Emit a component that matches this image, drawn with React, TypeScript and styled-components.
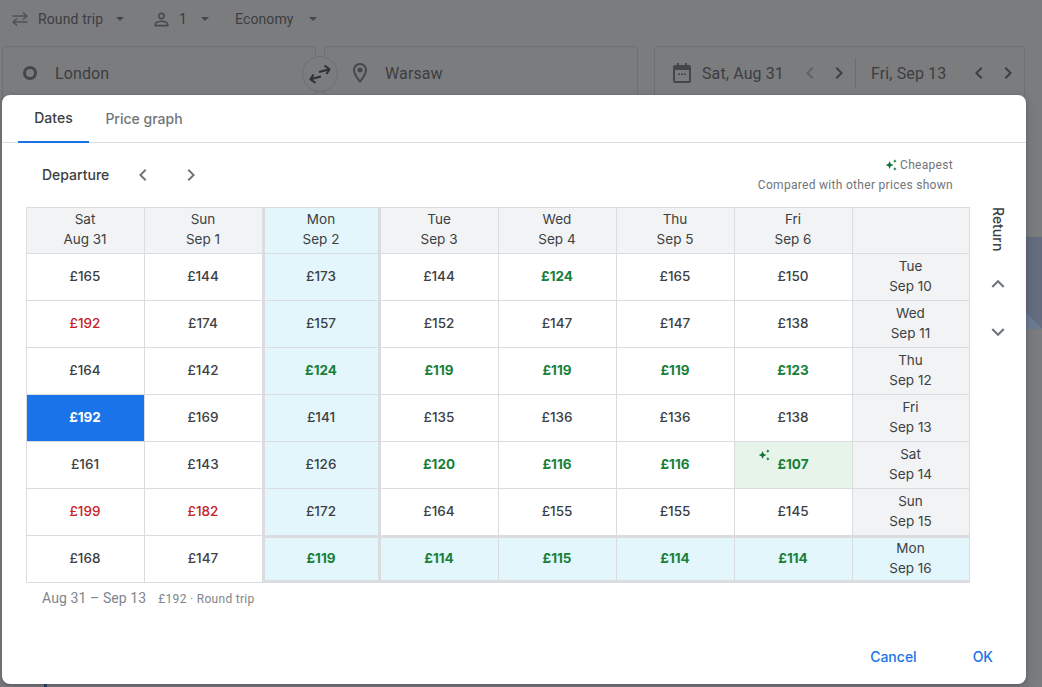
import React from "react";
import styled, { createGlobalStyle } from "styled-components";

const Global = createGlobalStyle`
  html, body { margin: 0; padding: 0; background: #7b7c7e; overflow: hidden; }
  * { box-sizing: border-box; }
  #root { width: 1042px; height: 687px; }
`;

const BODY = `"Roboto", "Liberation Sans", sans-serif`;
const DISPLAY = `"Inter", "Roboto", "Liberation Sans", sans-serif`;

const Page = styled.div`
  position: relative;
  width: 1042px;
  height: 687px;
  background: #7b7c7e;
  overflow: hidden;
  font-family: ${BODY};
  color: #3c3e42;
`;

const Toolbar = styled.div`
  display: flex;
  align-items: center;
  height: 38px;
  padding-left: 12px;
  font-size: 14px;
  letter-spacing: 0.12px;
`;

const ToolItem = styled.div<{ $w: number; $gap?: number }>`
  display: flex;
  align-items: center;
  width: ${(p) => p.$w}px;
  gap: ${(p) => p.$gap ?? 10}px;
  flex: none;
`;

const Caret = styled.span<{ $ml: number }>`
  width: 0;
  height: 0;
  margin-left: ${(p) => p.$ml}px;
  border-left: 4.5px solid transparent;
  border-right: 4.5px solid transparent;
  border-top: 4.5px solid #44464a;
`;

const SearchRow = styled.div`
  display: flex;
  height: 60px;
  padding: 8px 17px 0 2px;
  gap: 8px;
`;

const Field = styled.div<{ $w: number; $ml?: number }>`
  display: flex;
  align-items: center;
  width: ${(p) => p.$w}px;
  height: 60px;
  margin-left: ${(p) => p.$ml ?? 0}px;
  border: 1px solid #6e6f72;
  border-radius: 4px;
  font-size: 16px;
  letter-spacing: 0.12px;
  padding-bottom: 6px;
  color: #3c3e42;
  flex: none;
`;

const FieldIcon = styled.svg<{ $ml: number }>`
  margin-left: ${(p) => p.$ml}px;
  flex: none;
`;

const FieldText = styled.span<{ $ml: number }>`
  margin-left: ${(p) => p.$ml}px;
`;

const SwapBadge = styled.div`
  position: absolute;
  left: 302px;
  top: 56px;
  width: 36px;
  height: 36px;
  border-radius: 50%;
  background: #7b7c7e;
  border: 1px solid #6e6f72;
  display: flex;
  align-items: center;
  justify-content: center;
`;

const DateDivider = styled.span`
  width: 1px;
  height: 30px;
  background: #6a6b6e;
  margin: 0 15px 0 4px;
  flex: none;
`;

const NavGlyph = styled.svg<{ $ml?: number; $mt?: number }>`
  margin-left: ${(p) => p.$ml ?? 0}px;
  margin-top: ${(p) => p.$mt ?? 0}px;
  flex: none;
`;

const MapStrip = styled.div`
  position: absolute;
  left: 1026px;
  top: 237px;
  width: 16px;
  height: 92px;
  background: linear-gradient(45deg, #6b7a92 0 15%, #636d7f 15% 100%);
`;

const MapPin = styled.div`
  position: absolute;
  left: 44px;
  top: 684px;
  width: 3px;
  height: 3px;
  background: #2c3f66;
`;

const Dialog = styled.div`
  position: absolute;
  left: 2px;
  top: 95px;
  width: 1024px;
  height: 589px;
  background: #fff;
  border-radius: 8px;
  display: flex;
  flex-direction: column;
  box-shadow: 0 1px 3px rgba(40, 42, 46, 0.3), 0 4px 8px 3px rgba(40, 42, 46, 0.12);
`;

const Tabs = styled.div`
  display: flex;
  height: 48px;
  flex: none;
  padding-left: 16px;
  border-bottom: 1px solid #dadce0;
`;

const Tab = styled.div<{ $active?: boolean }>`
  height: 48px;
  width: ${(p) => (p.$active ? 71 : 110)}px;
  display: flex;
  align-items: center;
  justify-content: center;
  font-family: ${DISPLAY};
  font-size: 14px;
  font-weight: 500;
  padding-bottom: 1px;
  color: ${(p) => (p.$active ? "#3c4043" : "#70757a")};
  border-bottom: ${(p) => (p.$active ? "2px solid #1a73e8" : "none")};
`;

const Head = styled.div`
  display: flex;
  justify-content: space-between;
  height: 64px;
  flex: none;
`;

const HeadLeft = styled.div`
  display: flex;
  align-items: center;
  height: 62px;
  padding-left: 40px;
  font-family: ${DISPLAY};
  font-size: 14px;
  font-weight: 500;
  color: #3c4043;
`;

const Legend = styled.div`
  padding: 12px 73px 0 0;
  text-align: right;
  font-size: 12px;
  line-height: 20px;
  letter-spacing: 0.3px;
  color: #70757a;
`;

const LegendTop = styled.div`
  display: flex;
  justify-content: flex-end;
  align-items: center;
  gap: 3px;
`;

const Body = styled.div`
  display: flex;
  height: 376px;
  padding-left: 24px;
  flex: none;
`;

const Grid = styled.div`
  display: grid;
  grid-template-columns: repeat(7, 118px) 117px;
  grid-template-rows: 46px repeat(7, 47px);
  width: 944px;
  height: 376px;
  border-top: 1px solid #dadce0;
  border-left: 1px solid #dadce0;
`;

type Tone = "normal" | "low" | "high";

const sideRule = "inset 2px 0 0 #dadce0, inset -2px 0 0 #dadce0";
const rowRule = "inset 0 2px 0 #dadce0, inset 0 -2px 0 #dadce0";

const Cell = styled.div<{ $tone?: Tone; $bg?: string; $rowHi?: boolean; $colHi?: boolean }>`
  position: relative;
  display: flex;
  align-items: center;
  justify-content: center;
  font-family: ${DISPLAY};
  font-size: 13.5px;
  font-weight: ${(p) => (p.$tone === "low" ? 700 : 500)};
  padding: 0 1px 2px 0;
  color: ${(p) =>
    p.$tone === "low" ? "#188038" : p.$tone === "high" ? "#c5221f" : "#3c4043"};
  background: ${(p) => p.$bg ?? "#fff"};
  border-right: 1px solid #dadce0;
  border-bottom: 1px solid #dadce0;
  box-shadow: ${(p) =>
    [p.$colHi && sideRule, p.$rowHi && rowRule].filter(Boolean).join(", ") || "none"};
`;

const Label = styled(Cell)`
  flex-direction: column;
  font-weight: 400;
  line-height: 20px;
  color: #3c4043;
`;

const HeaderCell = styled(Label)`
  padding-bottom: 4px;
`;

const Selected = styled(Cell)`
  background: #1a73e8;
  color: #fff;
  font-weight: 700;
`;

const Spark = styled.svg`
  position: absolute;
  left: 23px;
  top: 7px;
`;

const Side = styled.div`
  width: 56px;
  display: flex;
  flex-direction: column;
  align-items: center;
`;

const ReturnLabel = styled.div`
  writing-mode: vertical-rl;
  height: 53px;
  font-family: ${DISPLAY};
  font-size: 14px;
  font-weight: 500;
  color: #3c4043;
`;

const SideButton = styled.div`
  width: 48px;
  height: 48px;
  display: flex;
  align-items: center;
  justify-content: center;
`;

const Foot = styled.div`
  display: flex;
  align-items: baseline;
  padding: 7px 0 0 40px;
  color: #80868b;
  flex: none;
`;

const FootDates = styled.span`
  font-size: 14px;
  letter-spacing: 0.1px;
`;

const FootPrice = styled.span`
  font-size: 12px;
  margin-left: 12px;
  letter-spacing: 0.3px;
`;

const Actions = styled.div`
  margin-top: auto;
  height: 56px;
  display: flex;
  align-items: center;
  justify-content: flex-end;
  padding-right: 33px;
  gap: 56px;
  font-family: ${DISPLAY};
  font-size: 14px;
  font-weight: 500;
  color: #1a73e8;
  flex: none;
`;

const Chev = ({
  dir,
  color,
  ml,
  mt,
  size = 24,
}: {
  dir: "l" | "r" | "u" | "d";
  color: string;
  ml?: number;
  mt?: number;
  size?: number;
}) => {
  const d = {
    l: "M15.4 7.4 14 6l-6 6 6 6 1.4-1.4L10.8 12z",
    r: "M8.6 7.4 10 6l6 6-6 6-1.4-1.4L13.2 12z",
    u: "M7.4 15.4 6 14l6-6 6 6-1.4 1.4L12 10.8z",
    d: "M7.4 8.6 6 10l6 6 6-6-1.4-1.4L12 13.2z",
  }[dir];
  return (
    <NavGlyph $ml={ml} $mt={mt} width={size} height={size} viewBox="0 0 24 24" fill={color}>
      <path d={d} />
    </NavGlyph>
  );
};

const SPARK =
  "M7 3.500 8.600 7.400 12.500 9 8.600 10.600 7 14.500 5.400 10.600 1.500 9 5.400 7.400zM14.500 1l.8 1.700 1.700.8-1.700.8-.8 1.700-.8-1.700-1.700-.8 1.700-.8zM14.500 12l.8 1.700 1.700.8-1.700.8-.8 1.700-.8-1.700-1.700-.8 1.700-.8z";

const columns = [
  ["Sat", "Aug 31"],
  ["Sun", "Sep 1"],
  ["Mon", "Sep 2"],
  ["Tue", "Sep 3"],
  ["Wed", "Sep 4"],
  ["Thu", "Sep 5"],
  ["Fri", "Sep 6"],
];

const rows: { label: [string, string]; prices: [string, Tone][] }[] = [
  { label: ["Tue", "Sep 10"], prices: [["£165", "normal"], ["£144", "normal"], ["£173", "normal"], ["£144", "normal"], ["£124", "low"], ["£165", "normal"], ["£150", "normal"]] },
  { label: ["Wed", "Sep 11"], prices: [["£192", "high"], ["£174", "normal"], ["£157", "normal"], ["£152", "normal"], ["£147", "normal"], ["£147", "normal"], ["£138", "normal"]] },
  { label: ["Thu", "Sep 12"], prices: [["£164", "normal"], ["£142", "normal"], ["£124", "low"], ["£119", "low"], ["£119", "low"], ["£119", "low"], ["£123", "low"]] },
  { label: ["Fri", "Sep 13"], prices: [["£192", "normal"], ["£169", "normal"], ["£141", "normal"], ["£135", "normal"], ["£136", "normal"], ["£136", "normal"], ["£138", "normal"]] },
  { label: ["Sat", "Sep 14"], prices: [["£161", "normal"], ["£143", "normal"], ["£126", "normal"], ["£120", "low"], ["£116", "low"], ["£116", "low"], ["£107", "low"]] },
  { label: ["Sun", "Sep 15"], prices: [["£199", "high"], ["£182", "high"], ["£172", "normal"], ["£164", "normal"], ["£155", "normal"], ["£155", "normal"], ["£145", "normal"]] },
  { label: ["Mon", "Sep 16"], prices: [["£168", "normal"], ["£147", "normal"], ["£119", "low"], ["£114", "low"], ["£115", "low"], ["£114", "low"], ["£114", "low"]] },
];

const HI = "#e2f6fb";
const GREY = "#f1f3f4";

export default function App() {
  return (
    <Page>
      <Global />
      <Toolbar>
        <ToolItem $w={139}>
          <svg width="16" height="14" viewBox="0 0 16 14" fill="none" stroke="#505154" strokeWidth="1.500">
            <path d="M0.500 4H15M11 0.500 15 4l-4 3.500M15.500 10H1M5 6.500 1 10l4 3.500" />
          </svg>
          <span>Round trip</span>
          <Caret $ml={3} />
        </ToolItem>
        <ToolItem $w={84} $gap={7}>
          <svg width="21" height="21" viewBox="0 0 24 24" fill="#48494c">
            <path d="M12 5.900c1.160 0 2.100.94 2.100 2.100s-.94 2.100-2.100 2.100S9.900 9.160 9.900 8s.94-2.100 2.100-2.100m0 9c2.970 0 6.100 1.460 6.100 2.100v1.100H5.900V17c0-.64 3.130-2.100 6.100-2.100M12 4C9.790 4 8 5.790 8 8s1.790 4 4 4 4-1.790 4-4-1.790-4-4-4zm0 9c-2.670 0-8 1.340-8 4v3h16v-3c0-2.660-5.330-4-8-4z" />
          </svg>
          <span>1</span>
          <Caret $ml={7} />
        </ToolItem>
        <ToolItem $w={100} $gap={8}>
          <span>Economy</span>
          <Caret $ml={7} />
        </ToolItem>
      </Toolbar>
      <SearchRow>
        <Field $w={314}>
          <FieldIcon $ml={19} width="16" height="16" viewBox="0 0 16 16" fill="none" stroke="#44464a" strokeWidth="3">
            <circle cx="8" cy="8" r="5.500" />
          </FieldIcon>
          <FieldText $ml={17}>London</FieldText>
        </Field>
        <Field $w={314}>
          <FieldIcon $ml={23} width="24" height="24" viewBox="0 0 24 24" fill="#44464a">
            <path d="M12 2a7 7 0 0 0-7 7c0 5.200 7 13 7 13s7-7.800 7-13a7 7 0 0 0-7-7zm0 17c-2-2.600-5-7-5-10a5 5 0 0 1 10 0c0 3-3 7.400-5 10z" />
            <circle cx="12" cy="9" r="2.500" />
          </FieldIcon>
          <FieldText $ml={13}>Warsaw</FieldText>
        </Field>
        <Field $w={371} $ml={8}>
          <FieldIcon $ml={15} width="24" height="24" viewBox="0 0 24 24" fill="#44464a">
            <path d="M7 2h2v2h6V2h2v2h2a2 2 0 0 1 2 2v14a2 2 0 0 1-2 2H5a2 2 0 0 1-2-2V6a2 2 0 0 1 2-2h2zM5 9v11h14V9zM8 12.500h2V14H8zM11 12.500h2V14h-2zM14 12.500h2V14h-2z" />
          </FieldIcon>
          <FieldText $ml={8}>Sat, Aug 31</FieldText>
          <Chev dir="l" color="#616265" ml={14} />
          <Chev dir="r" color="#3c3e42" ml={5} />
          <DateDivider />
          <span>Fri, Sep 13</span>
          <Chev dir="l" color="#3c3e42" ml={21} />
          <Chev dir="r" color="#3c3e42" ml={5} />
        </Field>
      </SearchRow>
      <SwapBadge>
        <svg width="24" height="24" viewBox="0 0 24 24" fill="none" stroke="#2f3033" strokeWidth="2">
          <path d="M11 10 21.500 7.200M16.500 3.500 21.500 7.200 18.500 12M13 14.500 2.500 17.300M7.500 21 2.500 17.300 5.500 12.500" />
        </svg>
      </SwapBadge>
      <MapStrip />
      <MapPin />
      <Dialog>
        <Tabs>
          <Tab $active>Dates</Tab>
          <Tab>Price graph</Tab>
        </Tabs>
        <Head>
          <HeadLeft>
            Departure
            <Chev dir="l" color="#70757a" ml={22} mt={2} />
            <Chev dir="r" color="#70757a" ml={24} mt={2} />
          </HeadLeft>
          <Legend>
            <LegendTop>
              <svg width="12" height="12" viewBox="1 0.500 16 17" fill="#137333">
                <path d={SPARK} />
              </svg>
              Cheapest
            </LegendTop>
            <div>Compared with other prices shown</div>
          </Legend>
        </Head>
        <Body>
          <Grid>
            {columns.map(([a, b], i) => (
              <HeaderCell key={a} $bg={i === 2 ? HI : GREY} $colHi={i === 2}>
                <span>{a}</span>
                <span>{b}</span>
              </HeaderCell>
            ))}
            <HeaderCell $bg={GREY} />
            {rows.map((r, ri) => (
              <React.Fragment key={r.label[1]}>
                {r.prices.map(([p, t], ci) => {
                  if (ri === 3 && ci === 0) return <Selected key={ci}>{p}</Selected>;
                  const isRowHi = ri === 6 && ci >= 2;
                  const isColHi = ci === 2;
                  const best = ri === 4 && ci === 6;
                  return (
                    <Cell
                      key={ci}
                      $tone={t}
                      $rowHi={isRowHi}
                      $colHi={isColHi}
                      $bg={best ? "#e6f4ea" : isRowHi || isColHi ? HI : "#fff"}
                    >
                      {best && (
                        <Spark width="12" height="12" viewBox="1 0.500 16 17" fill="#137333">
                          <path d={SPARK} />
                        </Spark>
                      )}
                      {p}
                    </Cell>
                  );
                })}
                <Label $bg={ri === 6 ? HI : GREY} $rowHi={ri === 6}>
                  <span>{r.label[0]}</span>
                  <span>{r.label[1]}</span>
                </Label>
              </React.Fragment>
            ))}
          </Grid>
          <Side>
            <ReturnLabel>Return</ReturnLabel>
            <SideButton>
              <Chev dir="u" color="#70757a" size={26} />
            </SideButton>
            <SideButton>
              <Chev dir="d" color="#70757a" size={26} />
            </SideButton>
          </Side>
        </Body>
        <Foot>
          <FootDates>Aug 31 – Sep 13</FootDates>
          <FootPrice>£192 · Round trip</FootPrice>
        </Foot>
        <Actions>
          <span>Cancel</span>
          <span>OK</span>
        </Actions>
      </Dialog>
    </Page>
  );
}
